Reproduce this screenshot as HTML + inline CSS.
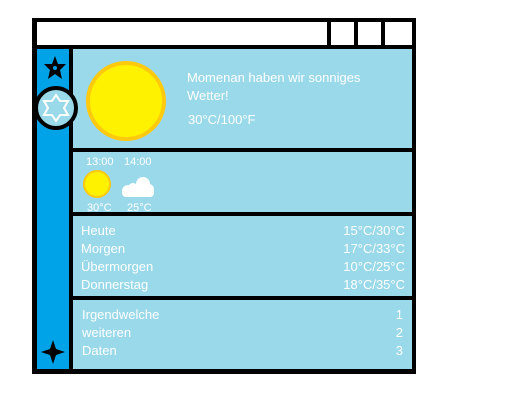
<!DOCTYPE html>
<html><head><style>
*{margin:0;padding:0}
body{width:507px;height:416px;background:#fff;position:relative;font-family:"Liberation Sans",sans-serif;color:#fff;overflow:hidden}
.a{position:absolute}
.t{position:absolute;font-size:13px;line-height:14px;white-space:nowrap}
.r{text-align:right}
</style></head><body>
<div class="a" style="left:32px;top:18px;width:384px;height:356px;background:#000"></div>
<div class="a" style="left:37px;top:22px;width:290px;height:23px;background:#fff"></div>
<div class="a" style="left:331px;top:22px;width:23px;height:23px;background:#fff"></div>
<div class="a" style="left:358px;top:22px;width:23px;height:23px;background:#fff"></div>
<div class="a" style="left:385px;top:22px;width:27px;height:23px;background:#fff"></div>
<div class="a" style="left:37px;top:49px;width:32px;height:320px;background:#00a2e8"></div>
<div class="a" style="left:73px;top:49px;width:339px;height:99px;background:#99d9ea"></div>
<div class="a" style="left:73px;top:152px;width:339px;height:60px;background:#99d9ea"></div>
<div class="a" style="left:73px;top:216px;width:339px;height:80px;background:#99d9ea"></div>
<div class="a" style="left:73px;top:300px;width:339px;height:69px;background:#99d9ea"></div>
<svg class="a" style="left:0;top:0" width="507" height="416">
<polygon points="55,56 58,64 66,64 60,70 62,79 55,74 48,79 50,70 44,64 52,64" fill="#000"/>
<circle cx="55" cy="68" r="2" fill="#00a2e8"/>
<circle cx="56" cy="108" r="20" fill="#99d9ea" stroke="#000" stroke-width="4"/>
<polygon points="56,95 60,101 68,101 64,108 68,115 60,115 56,121 52,115 44,115 48,108 44,101 52,101" fill="none" stroke="#fff" stroke-width="2"/>
<polygon points="53,340 56,349 65,352 56,355 53,364 50,355 41,352 50,349" fill="#000"/>
<circle cx="126" cy="101" r="38" fill="#fff200" stroke="#ffc90e" stroke-width="4"/>
<circle cx="97" cy="184" r="13" fill="#fff200" stroke="#ffc90e" stroke-width="2"/>
<g fill="#fff"><circle cx="143" cy="184" r="7"/><circle cx="133" cy="188" r="5"/><circle cx="149" cy="189" r="5"/><rect x="122" y="188" width="32" height="9" rx="4"/><circle cx="128" cy="191" r="6"/></g>
</svg>
<div class="t" style="left:187px;top:69px;font-size:13px;line-height:18px">Momenan haben wir sonniges<br>Wetter!</div>
<div class="t" style="left:188px;top:113px">30°C/100°F</div>
<div class="t" style="left:86px;top:155px;font-size:11px">13:00</div>
<div class="t" style="left:124px;top:155px;font-size:11px">14:00</div>
<div class="t" style="left:87px;top:201px;font-size:11px">30°C</div>
<div class="t" style="left:127px;top:201px;font-size:11px">25°C</div>
<div class="t" style="left:81px;top:222px;line-height:18px">Heute<br>Morgen<br>Übermorgen<br>Donnerstag</div>
<div class="t r" style="right:102px;top:222px;line-height:18px">15°C/30°C<br>17°C/33°C<br>10°C/25°C<br>18°C/35°C</div>
<div class="t" style="left:82px;top:306px;line-height:18px">Irgendwelche<br>weiteren<br>Daten</div>
<div class="t r" style="right:104px;top:306px;line-height:18px">1<br>2<br>3</div>
</body></html>
